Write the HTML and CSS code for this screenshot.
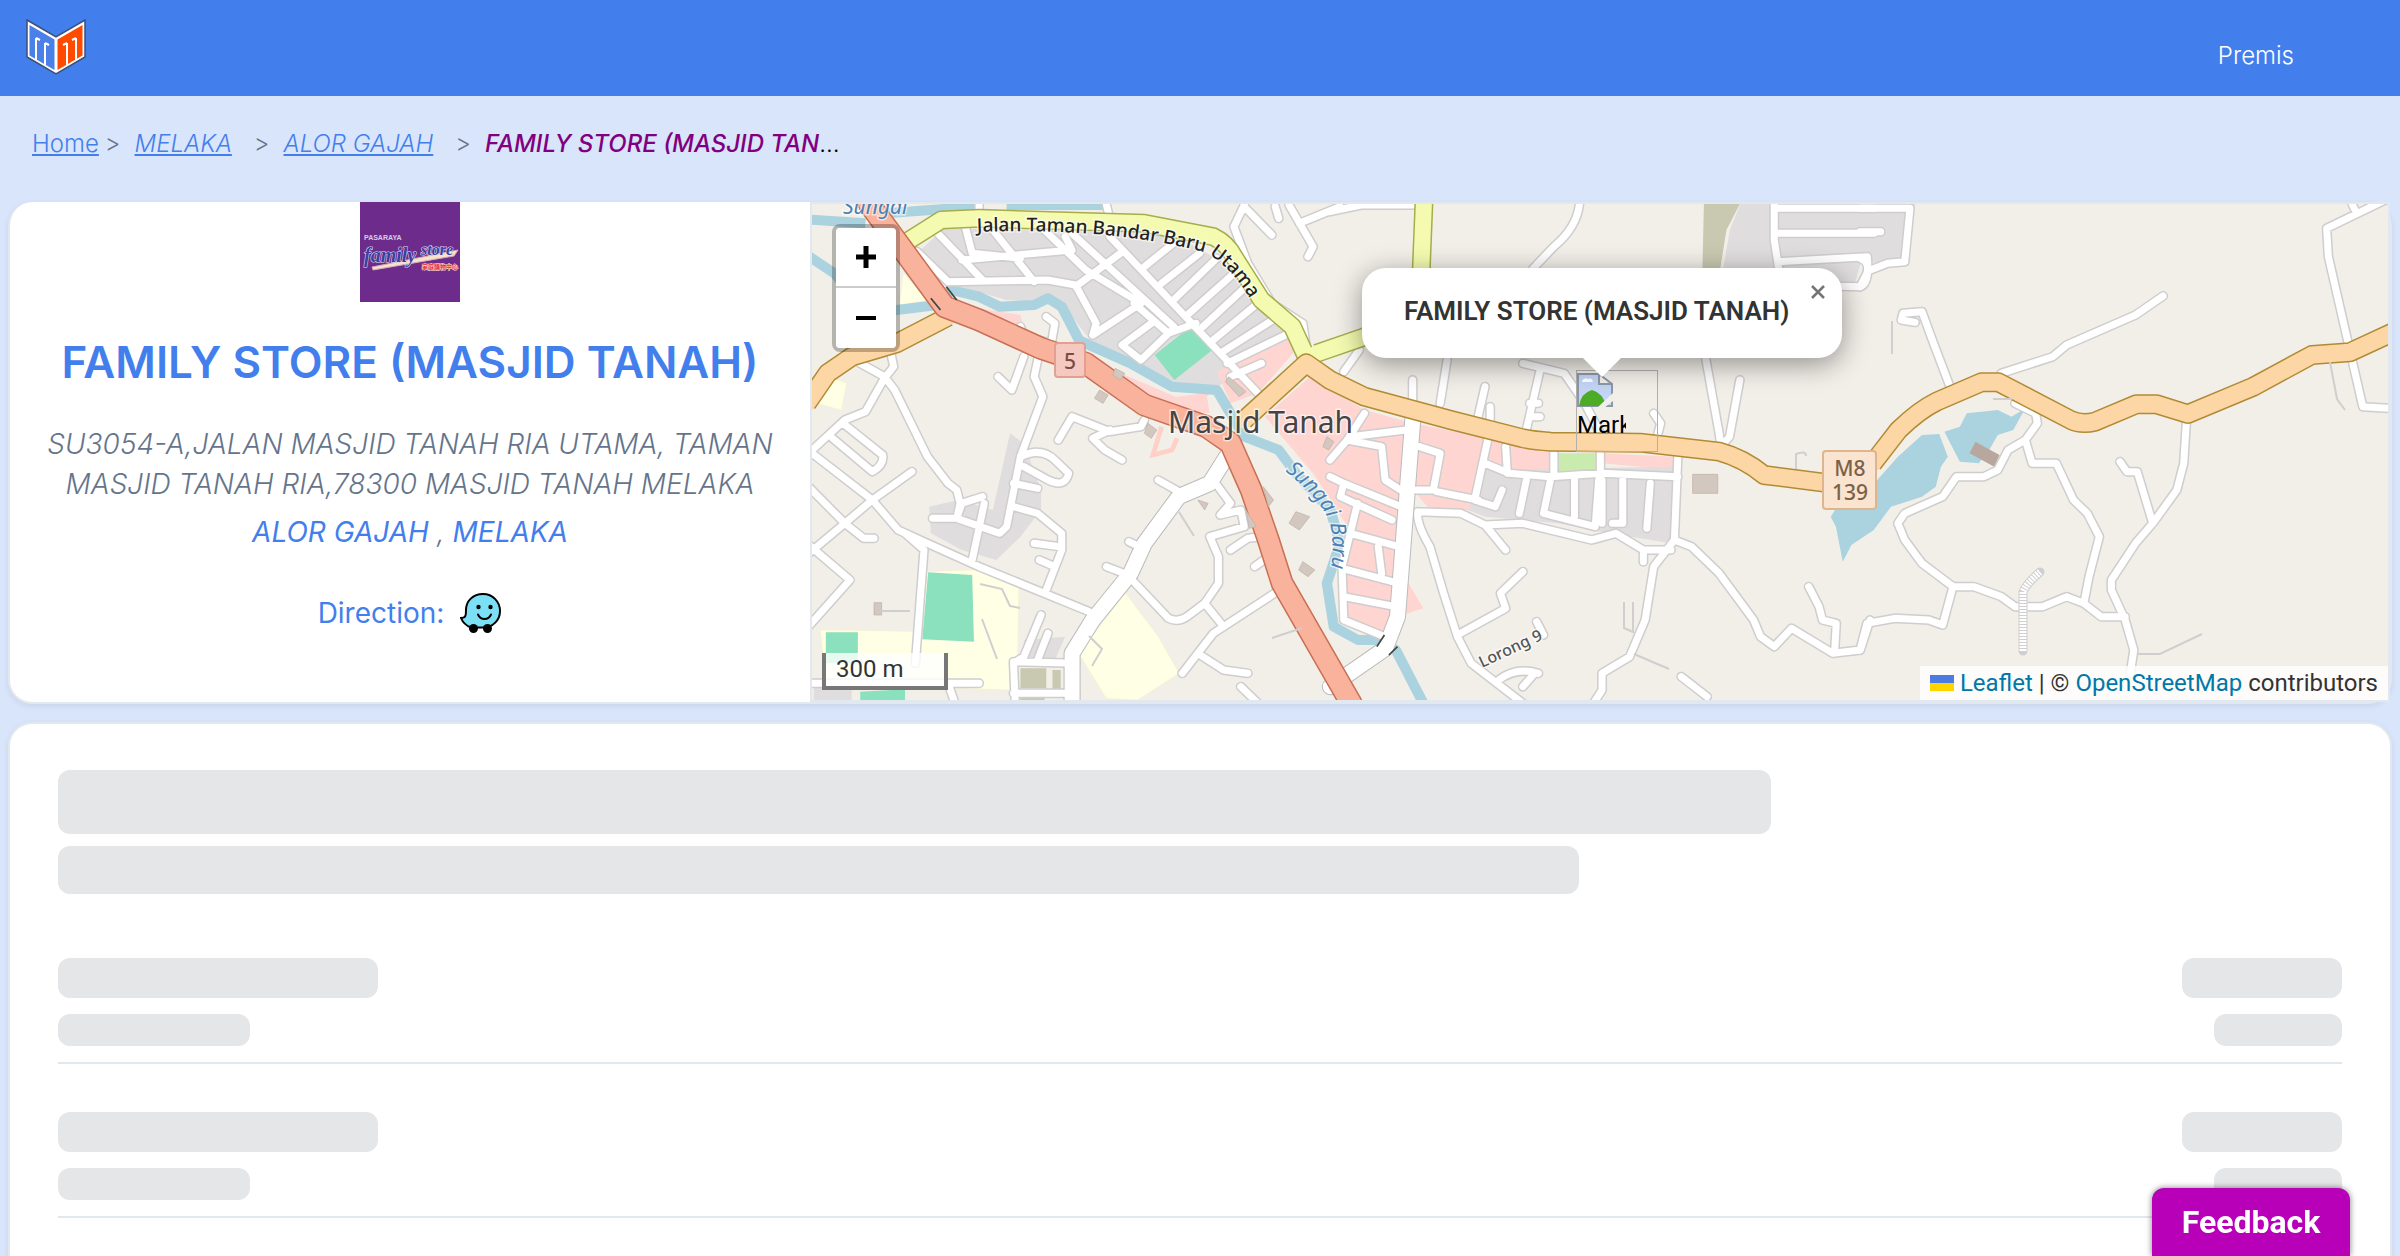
FILE: index.html
```html
<!DOCTYPE html>
<html lang="ms">
<head>
<meta charset="utf-8">
<meta name="viewport" content="width=device-width, initial-scale=1">
<title>FAMILY STORE (MASJID TANAH)</title>
<link rel="stylesheet" href="styles.css">
</head>
<body>
<header class="topbar">
  <a class="brand" href="#" aria-label="Home">
    <svg width="60" height="56" viewBox="0 0 60 56">
      <path d="M1 1 30 18 59 1V38L30 55 1 38Z" fill="#fff" stroke="#3c4f78" stroke-width="1.5"/>
      <path d="M3.500 6 28.500 20.500V51L3.500 36.500Z" fill="#4a80e8"/>
      <path d="M31.500 20.500 56.500 6V36.500L31.500 51Z" fill="#ff4a00"/>
      <path d="M10 41V19M19 46V24M41 46V24M50 41V19M10 19 14 21M19 24 23 26M41 24 37 26M50 19 46 21" fill="none" stroke="#fff" stroke-width="2"/>
    </svg>
  </a>
  <nav><a class="nav-link" href="#">Premis</a></nav>
</header>

<nav class="crumbs" aria-label="Breadcrumb">
  <a href="#">Home</a><span class="sep sep-first">&gt;</span>
  <a class="place" href="#">MELAKA</a><span class="sep">&gt;</span>
  <a class="place" href="#">ALOR GAJAH</a><span class="sep">&gt;</span>
  <span class="current"><em>FAMILY STORE (MASJID TANAH)</em></span>
</nav>

<main class="content">
  <section class="card premise">
    <div class="info">
      <svg class="shop-logo" width="100" height="100" viewBox="0 0 100 100" role="img" aria-label="Pasaraya Family Store">
        <rect width="100" height="100" fill="#6d2c8b"/>
        <path d="M12 65 98 48 94 54 13 68Z" fill="#f4e3c8" stroke="#d9a7b8" stroke-width="1"/>
        <text x="4" y="38" class="logo-small">PASARAYA</text>
        <text x="4" y="60" class="logo-big">family</text>
        <text x="61" y="53" class="logo-big">store</text>
        <text x="62" y="67" class="logo-cjk">家庭購物中心</text>
      </svg>
      <h1>FAMILY STORE (MASJID TANAH)</h1>
      <address>
        <p>SU3054-A,JALAN MASJID TANAH RIA UTAMA, TAMAN MASJID TANAH RIA,78300 MASJID TANAH MELAKA</p>
        <p class="area"><a href="#">ALOR GAJAH</a> , <a href="#">MELAKA</a></p>
      </address>
      <div class="direction">
        <span>Direction:</span>
        <a href="#" aria-label="Waze">
          <svg width="42" height="42" viewBox="0 0 42 42">
            <path d="M23 2C13 2 6 9 6 18c0 5 0 8-5 8 2 5 6 8 10 9.500h12C33 35.500 40 28 40 19S33 2 23 2Z" fill="#7be0f5" stroke="#000" stroke-width="2"/>
            <circle cx="13.500" cy="36.500" r="4.500"/><circle cx="27.500" cy="36.500" r="4.500"/>
            <circle cx="18.500" cy="15" r="2.200"/><circle cx="30.500" cy="15" r="2.200"/>
            <path d="M18 22.500c2.500 6 10.500 6 13 0" fill="none" stroke="#000" stroke-width="2" stroke-linecap="round"/>
          </svg>
        </a>
      </div>
    </div>

    <div class="map">
      <svg class="tiles" viewBox="0 0 1576 496" preserveAspectRatio="xMidYMid slice" aria-hidden="true">
        <defs>
          <g id="minor">
            <g transform="translate(-12 -14) scale(.34439 .33333)">
              <path d="M20 778 210 930 285 1020 370 1060 520 1130 840 1265M20 795 130 690 190 665 245 565 272 530 265 495M175 520 245 560 275 600 370 800 430 880 455 900 465 940 455 985M125 700 240 795Q245 825 210 845L95 745M325 845 210 930 130 1000 20 1095M20 885 130 1000 185 1045 215 1045M20 1060 145 1170 20 1315M305 1030 360 1080 335 1420M385 985 455 985 470 940 530 920M455 985 580 1030 600 1010 640 800 705 620 680 560 690 510M650 500 615 600 575 560M535 940 500 1110M640 800Q700 770 740 810L780 850Q770 895 720 870L650 830M620 880 690 895M620 950 690 970 760 1030V1080L715 1200M680 1060 755 1070M695 1110 740 1130M750 750 790 680 900 725 990 710 1000 690M900 720 850 745 885 780 935 810M1040 870 1100 905M1200 870 1250 940 1220 975 1280 960 1290 1010 1190 1040 1215 1100V1180L1175 1240 1230 1310M960 1165 1070 1285Q1100 1300 1130 1275L1175 1240M1110 1450 1200 1330 1400 1195M1155 1390 1230 1440 1300 1450M1280 1490 1330 1540M1250 1080 1300 1045 1340 1040M1320 1130 1360 1100M890 1130 940 1150M955 1055 985 1070M700 1275 650 1400 620 1420 625 1540M720 1330 690 1410M620 1415 800 1420M620 1510H800M20 1480H520M430 1480 450 1540"/>
              <path d="M340 185 430 275 720 270 800 285 860 400 850 435M400 130 530 270M480 110 500 190 640 205M470 210 790 180 770 140M560 120 680 275M700 110 830 240 990 340M790 130 1085 410M900 140 1330 610M800 290 930 190M990 340 850 435M970 340 1070 430 1150 400M1075 425 990 510 935 465 1020 400M1000 230 1090 155M1050 280 1160 190M1090 325 1210 205M1130 370 1260 250M1170 410 1300 285M1200 450 1335 335M1220 490 1380 385M1240 520 1420 430M1250 560 1340 520M1290 45 1260 110 1300 220 1370 340 1460 400 1470 470M1290 50 1370 135M1380 50 1390 85M1420 45 1490 170 1475 200M1450 100 1568 50M640 410 650 440 730 460 740 400 715 380M520 45V90M890 45 900 90"/>
            </g>
            <g transform="translate(518 -14) scale(.34439 .33333)">
              <path d="M0 65 90 45H240M725 35Q720 110 650 170L590 235M85 480 40 545M340 510 320 640M240 570V635M450 590 430 680M465 650V700M610 540 570 720M580 640H605M590 680H610M560 520 680 550 740 640 790 740M940 670 960 700 950 740M1090 500 1130 730 1135 770 1160 740 1190 570M1290 30V150L1310 285 1540 290Q1568 280 1560 200L1300 215M1300 55H1580M1300 130H1580"/>
              <path d="M100 670 50 750 0 810M50 750 150 770 160 870 220 910M60 740 220 720M0 860 40 880 30 920 180 990M40 880 230 960M80 940 35 1130 40 1290 170 1345M60 1030 200 1070M140 1070 150 1150M35 1135 200 1180M40 1220 190 1250M260 770 320 790 300 900H250M310 905 430 930M460 740 420 930 480 950 500 900M450 820 520 850 640 860 790 850 1010 860M510 770 515 850M650 780V850M785 790V860M570 870 550 970M640 870 620 970 770 1010 780 870M710 870V980M790 870V1000M850 870V1000H820M930 880 920 1015M1010 800 1000 1050M255 965 380 970 450 1005 560 1000 760 1050 830 1030 910 1080H990M450 1005 470 1030 510 1080M910 1080V1115M255 965Q250 1000 290 1070L330 1210 370 1340 410 1420 560 1540M370 1335 510 1255 495 1210 560 1145M600 1295 620 1335M490 1470Q540 1430 605 1450M560 1490 590 1455M1000 1050 940 1130 915 1290 870 1400 790 1450V1500L765 1540M1000 1050 1050 1070 1130 1150 1230 1290 1250 1340 1290 1370 1340 1315 1460 1390 1540 1380 1568 1290M1390 1190 1420 1250 1430 1290 1470 1300 1465 1390M1020 1460 1095 1520"/>
            </g>
            <g transform="translate(1048 -14) scale(.34439 .33333)">
              <path d="M0 55H145L130 215 80 220 30 240M0 125H60M0 205Q30 215 20 250L0 290M265 600 210 450 180 365 125 370 120 390 160 397M410 550 560 500 600 465 800 375 880 318M1525 30 1355 115 1360 200 1420 470 1460 650 1540 655M1430 45 1440 65M450 640 510 670 515 700 480 750 430 780 400 840 360 860 280 860 240 920 130 970 110 1000 130 1050 180 1120 270 1190 240 1305 200 1290 100 1285 20 1300 0 1380M480 750 500 820 570 820 620 930 660 970 695 1040 665 1160 650 1240M270 1190 330 1190 410 1220 450 1250H530L600 1220 650 1240 700 1280H770M948 690 940 820 920 900 850 1000 800 1060 730 1170V1200L770 1290 795 1380 785 1450M850 1000 805 845H775L755 815"/>
            </g>
          </g>
          <g id="avenue">
            <path transform="translate(-12 -14) scale(.34439 .33333)" d="M1245 790 1190 880 1100 920 1000 1060 960 1150 850 1290 790 1390V1540M1540 1490 1700 1375 1735 1280 1780 680"/>
          </g>
          <g id="primary">
            <path transform="translate(-12 -14) scale(.34439 .33333)" d="M200 40 420 350 520 390 700 475 830 520 1000 645 1180 710 1250 760 1310 900 1360 1050 1400 1180 1600 1540"/>
          </g>
          <g id="orange">
            <path transform="translate(-12 -14) scale(.34439 .33333)" d="M20 640 80 550 150 500 280 460 430 380M1290 690 1470 520 1539 570 1639 620 1889 690 2099 745Q2130 752 2180 755L2439 758 2669 785Q2740 805 2799 855L2990 880M3115 820 3190 720Q3250 660 3300 635L3430 577H3480L3690 690Q3720 705 3760 695L3880 643H3940L4030 672 4220 590 4390 495 4500 487 4640 420"/>
          </g>
          <g id="yellow">
            <path transform="translate(-12 -14) scale(.34439 .33333)" d="M310 155 410 90 520 85 1000 100 1200 140Q1240 160 1260 200L1340 330 1430 410 1470 500M1500 490 1640 440 1800 340 1812 30"/>
          </g>
          <path id="jalan" d="M165 28Q300 23 395 49 422 65 445 106"/>
          <path id="sungai" d="M473 267Q515 300 519 325 524 355 513 388"/>
          <path id="lorong" d="M670 464 734 434"/>
        </defs>

        <rect width="1576" height="496" fill="#f2efe9"/>
        <g transform="translate(-12 -14) scale(.34439 .33333)">
          <path fill="#dfdddd" d="M350 180 420 115 1080 130 1250 230 1440 440 1340 520 1250 560 1180 620 850 460 760 340 600 330 430 280ZM375 950 460 930 560 960 610 730 650 760 700 900 700 960 640 1040 570 1110 470 1080 380 1030ZM650 1350 770 1340 740 1410 650 1400ZM40 1490H150V1530H40Z"/>
          <path fill="#ffffe5" stroke="#fbf6ae" d="M60 1320 350 1325 370 1145 520 1140 635 1180 630 1500 75 1480ZM945 1210 1040 1340 1100 1450 980 1530 890 1525 810 1390ZM80 560 135 580 120 660 50 640ZM300 250 370 330 290 345Z"/>
          <path fill="#8be0bd" d="M372 1147 500 1155 505 1355 355 1348ZM75 1327H168V1420H75ZM175 1505 305 1498V1530H175ZM1140 405 1197 480 1087 570 1030 495Z"/>
          <path fill="#ffd5d1" d="M490 350 640 375 650 410 560 390ZM840 510 1000 580 1090 620 1180 610 1190 670 1050 650 880 560ZM1210 545 1420 450 1440 480 1330 610 1250 640ZM1350 680 1480 560 1640 660 1780 700 1980 740 2190 780 2190 870 1990 860 1960 960 1830 960 1780 900 1720 1350 1580 1290 1590 1010 1490 850ZM1750 1150 1810 1255 1750 1275ZM2330 790 2540 800V840L2330 820Z"/>
          <path fill="none" stroke="#ffd0c8" stroke-width="14" d="M1050 710 1025 795 1080 780 1095 745"/>
          <path fill="#c9c8b0" d="M640 1435H715V1495H640ZM733 1440H757V1497H733ZM640 1520H710V1540H640ZM2625 30H2735L2690 120 2670 250H2620Z"/>
          <path fill="#dfdddd" d="M2735 30H3240L3220 210 3080 220 3060 290 2850 290 2680 240 2700 120ZM1990 840 2540 830 2530 1060 2350 1030 2200 1000 1990 980 1940 960Z"/>
          <path fill="#c9ebad" d="M2200 790H2316V850L2195 845Z"/>
        </g>
        <g fill="none" stroke="#aad3df" stroke-width="30" stroke-linejoin="round">
          <path transform="translate(-12 -14) scale(.34439 .33333)" d="M20 88 190 100M250 70 510 50M600 45H880M20 195 100 250 180 350 280 360 400 345 440 300 520 320 580 350 680 345 720 325 760 350 810 450 850 470 960 520 1080 590 1210 600 1290 740 1390 780 1440 850 1540 960 1568 1060 1530 1180 1550 1310 1620 1350 1680 1350 1730 1380 1810 1540"/>
        </g>
        <g transform="translate(1048 -14) scale(.34439 .33333)">
          <path fill="#aad3df" d="M180 735 230 732 255 800 235 830 220 890 180 920 90 950 40 1020-25 1065-50 1115-70 1010-85 980-60 940 50 870 110 800ZM245 725 290 710 310 670 400 660 440 680 480 655 445 720 400 735 375 780 345 820 290 815Z"/>
          <path fill="#b8a79e" d="M335 755 405 795 390 830 318 790Z"/>
        </g>
        <use href="#minor" class="road case-minor"/>
        <use href="#avenue" class="road case-avenue"/>
        <use href="#minor" class="road fill-minor"/>
        <use href="#avenue" class="road fill-avenue"/>
        <use href="#yellow" class="road case-yellow"/>
        <use href="#yellow" class="road fill-yellow"/>
        <use href="#orange" class="road case-orange"/>
        <use href="#orange" class="road fill-orange"/>
        <use href="#primary" class="road case-primary"/>
        <use href="#primary" class="road fill-primary"/>
        <g transform="translate(-12 -14) scale(.34439 .33333)" fill="#d3c8bf" stroke="#bcaea4" stroke-width="2">
          <path d="M215 1238H237V1275H215ZM870 600 895 615 880 640 855 625ZM915 535 943 550 930 570 908 555ZM1010 700 1036 720 1020 745 1000 730ZM1245 560 1295 605 1275 620 1235 575ZM1345 890 1375 930 1360 950ZM1440 965 1480 980 1450 1020 1420 1000ZM1460 1115 1495 1140 1475 1160 1448 1140ZM1295 960 1325 1010 1305 1015ZM1155 930 1185 940 1175 960ZM2592 853H2665V910H2592ZM1530 740 1550 755 1535 780 1518 770Z"/>
          <path d="M425 290 455 330M380 325 408 360M1675 1370 1697 1335M1710 1395 1735 1370" stroke="#444" stroke-width="5"/>
        </g>
        <g fill="none" stroke="#d0cece" stroke-width="2">
          <path d="M69 407H98M168 380 190 385 198 402 208 404M170 415 185 455M277 432 290 445 280 462M367 308 382 332M460 434 490 424M821 398V428L812 424V398M822 450 857 465M1080 150V117M1181 195H1200M1518 158 1525 195 1533 206M1325 450H1348L1390 430M984 265V250Q994 246 994 252"/>
          <path d="M1211 447V388Q1214 380 1228 368" stroke-width="9" stroke-linecap="round"/>
          <path d="M1211 447V388Q1214 380 1228 368" stroke="#fff" stroke-width="7" stroke-dasharray="2 1"/>
        </g>

        <g class="shield">
          <rect x="243" y="139" width="30" height="34" rx="3" fill="#f6c9c0" stroke="#e29f92" stroke-width="2"/>
          <text x="258" y="165" fill="#7a4a45">5</text>
          <rect x="1011" y="247" width="53" height="58" rx="3" fill="#fae3cf" stroke="#deb58c" stroke-width="2"/>
          <text x="1038" y="272" fill="#7a6248">M8</text>
          <text x="1038" y="296" fill="#7a6248">139</text>
        </g>
        <g class="map-label">
          <text x="356" y="229" class="town">Masjid Tanah</text>
          <text class="street"><textPath href="#jalan">Jalan Taman Bandar Baru Utama</textPath></text>
          <text class="river"><textPath href="#sungai">Sungai Baru</textPath></text>
          <text x="31" y="10" class="river">Sungai</text>
          <text class="lane"><textPath href="#lorong">Lorong 9</textPath></text>
        </g>
      </svg>

      <div class="zoom">
        <button type="button" aria-label="Zoom in"><svg width="24" height="24" viewBox="0 0 24 24"><path d="M2 12H22M12 1V23" stroke="#000" stroke-width="5"/></svg></button>
        <button type="button" aria-label="Zoom out"><svg width="24" height="24" viewBox="0 0 24 24"><path d="M2 12H22" stroke="#000" stroke-width="4"/></svg></button>
      </div>

      <div class="marker">
        <svg width="36" height="38" viewBox="0 0 36 38">
          <path d="M1 3H22L35 14V35H1Z" fill="#c3d4f5" stroke="#8c98a8" stroke-width="2"/>
          <path d="M5 10q2-4 6-2 4-2 5 3H5Z" fill="#fff"/>
          <path d="M2 35Q4 22 15 19 26 22 29 35Z" fill="#4dac26"/>
          <path d="M22 3V13H35Z" fill="#f2efe9" stroke="#8c98a8" stroke-width="2"/>
          <path d="M36 22 20 37H27L36 30Z" fill="#f2efe9"/>
        </svg>
        <span>Marker</span>
      </div>

      <div class="popup">
        <strong>FAMILY STORE (MASJID TANAH)</strong>
        <button type="button" class="popup-close" aria-label="Close popup"><svg width="16" height="16" viewBox="0 0 16 16"><path d="M2 2 14 14M14 2 2 14" stroke="#757575" stroke-width="2.500"/></svg></button>
      </div>

      <div class="scale">300 m</div>
      <div class="credit">
        <svg width="24" height="16" viewBox="0 0 24 16"><path d="M0 0H24V8H0Z" fill="#4c7be1"/><path d="M0 8H24V16H0Z" fill="#ffd500"/></svg>
        <a href="#">Leaflet</a> | © <a href="#">OpenStreetMap</a> contributors
      </div>
    </div>
  </section>

  <section class="card loading" aria-busy="true">
    <div class="bone bone-title"></div>
    <div class="bone bone-subtitle"></div>
    <ul>
      <li><div><div class="bone name"></div><div class="bone unit"></div></div><div class="end"><div class="bone price"></div><div class="bone date"></div></div></li>
      <li><div><div class="bone name"></div><div class="bone unit"></div></div><div class="end"><div class="bone price"></div><div class="bone date"></div></div></li>
    </ul>
  </section>
</main>
<button type="button" class="feedback">Feedback</button>
</body>
</html>
```

FILE: styles.css
```css
* { box-sizing: border-box; }

html { scrollbar-width: none; }

body {
  display: flex;
  flex-direction: column;
  min-height: 100vh;
  margin: 0;
  background: #d9e5fb;
  color: #000;
  font-family: Inter, "Liberation Sans", sans-serif;
  font-size: 24px;
  line-height: 32px;
}

h1, p, ul { margin: 0; padding: 0; }
a { color: #437fec; }
button { font: inherit; border: 0; cursor: pointer; }
svg { display: block; }

.topbar {
  display: flex;
  justify-content: space-between;
  align-items: center;
  height: 96px;
  padding: 0 106px 0 26px;
  background: #437fec;
}
.brand { margin-bottom: 2px; }
.nav-link {
  display: block;
  padding-top: 16px;
  color: #fff;
  font-weight: 300;
  text-decoration: none;
}

.crumbs {
  display: flex;
  padding: 32px;
  height: 106px;
  font-weight: 300;
}
.crumbs .place { font-style: italic; }
.sep { padding: 0 14px 0 22px; color: #64748b; }
.sep-first { padding-left: 6px; }
.current {
  width: 358px;
  overflow: hidden;
  text-overflow: ellipsis;
  white-space: nowrap;
}
.current em { color: #800080; font-weight: 500; }

.content { flex: 1; display: flex; flex-direction: column; padding: 0 8px; }
.card {
  background: #fff;
  border: 2px solid #e2e8f0;
  border-radius: 24px;
  box-shadow: 0 2px 6px rgba(0, 0, 0, .08);
}

.premise { display: flex; height: 502px; margin-bottom: 18px; border-top: 0; }
.info {
  flex: 0 0 800px;
  display: flex;
  flex-direction: column;
  align-items: center;
  text-align: center;
}
.logo-small { font: 700 7px "Liberation Sans", sans-serif; fill: #d8cdea; }
.logo-big {
  font: italic 700 20px "Liberation Serif", serif;
  fill: #3d3f9c;
  stroke: #e6e0f4;
  stroke-width: 1px;
  paint-order: stroke;
}
.logo-big + .logo-big { font-size: 16px; }
.logo-cjk {
  font: 700 6px "Noto Sans CJK TC", sans-serif;
  fill: #e8323c;
  stroke: #fbdcdc;
  stroke-width: 1px;
  paint-order: stroke;
}
h1 {
  margin-top: 32px;
  color: #437fec;
  font-size: 44px;
  line-height: 56px;
  font-weight: 600;
}
address {
  margin-top: 34px;
  padding: 0 24px;
  color: #64748b;
  font-size: 28px;
  line-height: 40px;
  font-weight: 300;
}
.area { margin-top: 8px; }
.area a { text-decoration: none; font-weight: 400; }
.direction {
  display: flex;
  align-items: center;
  gap: 16px;
  margin-top: 40px;
  color: #437fec;
  font-size: 28px;
}

.map {
  position: relative;
  flex: 1;
  min-width: 0;
  overflow: hidden;
  margin: 2px;
  outline: 2px solid #e2e8f0;
  color: #333;
  font-family: Roboto, "Liberation Sans", sans-serif;
}
.map a { color: #0078a8; text-decoration: none; }
.tiles { width: 100%; height: 100%; }

.road { fill: none; stroke-linejoin: round; stroke-linecap: round; }
#minor path, #avenue path, #primary path, #orange path, #yellow path { vector-effect: non-scaling-stroke; }
.case-minor { stroke: #cfcdcd; stroke-width: 10px; }
.fill-minor { stroke: #fff; stroke-width: 7px; }
.case-avenue { stroke: #bbb; stroke-width: 17px; }
.fill-avenue { stroke: #fff; stroke-width: 15px; }
.case-yellow { stroke: #a6ad4a; stroke-width: 19px; stroke-linecap: butt; }
.fill-yellow { stroke: #f4fbb0; stroke-width: 16px; }
.case-orange { stroke: #b18b34; stroke-width: 20px; stroke-linecap: butt; }
.fill-orange { stroke: #fcd6a4; stroke-width: 17px; }
.case-primary { stroke: #c96f53; stroke-width: 23px; }
.fill-primary { stroke: #f9b29c; stroke-width: 20px; }

.shield text { font: 500 21px "Noto Sans", sans-serif; text-anchor: middle; }
.map-label text {
  font-family: "Noto Sans", sans-serif;
  paint-order: stroke;
  stroke: rgba(255, 255, 255, .6);
  stroke-width: 3px;
  fill: #222;
}
.map-label .town { font-size: 30px; fill: #444; }
.map-label .street { font-size: 19px; font-weight: 500; }
.map-label .river { font-size: 21px; font-style: italic; fill: #4d80b3; }
.map-label .lane { font-size: 16px; font-weight: 500; fill: #555; }

.zoom {
  position: absolute;
  left: 20px;
  top: 20px;
  border: 4px solid rgba(0, 0, 0, .25);
  border-radius: 8px;
  background-clip: padding-box;
}
.zoom button {
  display: grid;
  place-items: center;
  width: 60px;
  height: 60px;
  background: #fff;
}
.zoom button:first-child { border-bottom: 2px solid #ccc; border-radius: 4px 4px 0 0; }
.zoom button:last-child { border-radius: 0 0 4px 4px; }

.marker {
  position: absolute;
  left: calc(50% - 24px);
  top: 166px;
  width: 82px;
  height: 82px;
  border: 1px solid #b0b0b0;
  color: #000;
}
.marker span { display: block; width: 49px; overflow: hidden; }

.popup {
  position: absolute;
  left: calc(50% + 2px);
  top: 64px;
  transform: translateX(-50%);
  width: 480px;
  height: 90px;
  padding: 26px 42px;
  border-radius: 24px;
  background: #fff;
  box-shadow: 0 6px 28px rgba(0, 0, 0, .4);
  font-size: 26px;
  line-height: 34px;
  white-space: nowrap;
}
.popup strong { font-weight: 600; }
.popup::after {
  content: "";
  position: absolute;
  left: 220px;
  top: 89px;
  border: 20px solid transparent;
  border-top-color: #fff;
  border-bottom: 0;
}
.popup-close {
  position: absolute;
  right: 12px;
  top: 12px;
  padding: 4px;
  background: none;
}

.scale {
  position: absolute;
  left: 10px;
  bottom: 10px;
  width: 126px;
  height: 37px;
  padding: 0 10px;
  border: 4px solid #777;
  border-top: 0;
  background: rgba(255, 255, 255, .8);
}
.credit {
  position: absolute;
  right: 0;
  bottom: 0;
  padding: 0 10px;
  background: rgba(255, 255, 255, .8);
  line-height: 34px;
}
.credit svg { display: inline-block; }

.loading {
  flex: 1;
  padding: 46px 48px 0;
  border-bottom: 0;
  border-radius: 24px 24px 0 0;
}
.bone { border-radius: 12px; background: #e5e6e8; }
.bone-title { width: 75%; height: 64px; }
.bone-subtitle { width: 66.6%; height: 48px; margin-top: 12px; }
.loading ul { margin-top: 16px; list-style: none; }
.loading li {
  display: flex;
  justify-content: space-between;
  padding: 48px 0 16px;
  border-bottom: 2px solid #e2e8f0;
}
.name { width: 320px; height: 40px; }
.unit { width: 192px; height: 32px; margin-top: 16px; }
.end { display: flex; flex-direction: column; align-items: flex-end; }
.price { width: 160px; height: 40px; }
.date { width: 128px; height: 32px; margin-top: 16px; }

.feedback {
  position: fixed;
  right: 50px;
  bottom: 0;
  width: 198px;
  height: 68px;
  border-radius: 12px 12px 0 0;
  background: #b700b7;
  box-shadow: 0 0 6px rgba(0, 0, 0, .5);
  color: #fff;
  font-family: Roboto, "Liberation Sans", sans-serif;
  font-size: 32px;
  font-weight: 700;
}
```
